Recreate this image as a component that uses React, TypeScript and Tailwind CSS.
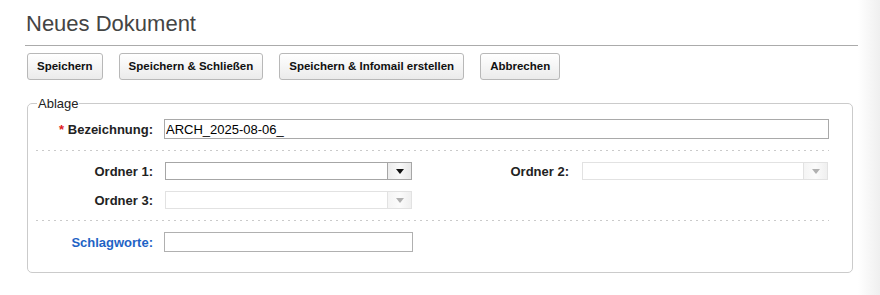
import React from 'react';

const FONT = "font-['Liberation_Sans',Arial,sans-serif]";

function ToolButton({ label }: { label: string }) {
  return (
    <button
      type="button"
      className="h-[27px] px-[9px] rounded-[3px] border border-[#b8b8b8] bg-linear-to-b from-white to-[#ebebeb] text-[11.5px] font-bold text-[#111] leading-none"
    >
      {label}
    </button>
  );
}

function Dropdown({ disabled, width }: { disabled?: boolean; width: string }) {
  return (
    <div
      className={`flex h-[18px] ${width} border bg-white ${
        disabled ? 'border-[#e2e2e2]' : 'border-[#a6a6a6]'
      }`}
    >
      <div className="flex-1" />
      <div
        className={`flex w-[24px] items-center justify-center border-l bg-linear-to-r ${
          disabled
            ? 'border-[#e2e2e2] from-[#f4f4f4] via-[#fbfbfb] to-[#efefef]'
            : 'border-[#a6a6a6] from-[#ececec] via-[#f9f9f9] to-[#e8e8e8]'
        }`}
      >
        <svg width="8" height="5" viewBox="0 0 8 5">
          <path d="M0 0H8L4 5Z" fill={disabled ? '#b0b0b0' : '#111'} />
        </svg>
      </div>
    </div>
  );
}

function Label({ children, className = '' }: { children: React.ReactNode; className?: string }) {
  return (
    <label className={`w-[117px] shrink-0 text-right text-[13px] font-bold leading-[15px] ${className}`}>
      {children}
    </label>
  );
}

function Separator() {
  return (
    <div className="h-px bg-[repeating-linear-gradient(90deg,#cacaca_0_2px,transparent_2px_6px)]" />
  );
}

export default function App() {
  return (
    <div className={`flex min-h-[295px] w-full bg-white ${FONT}`}>
      <div className="w-[858px] shrink-0 pl-[25px]">
        <h1 className="mt-[11px] pl-[1px] text-[22px] leading-[26px] font-normal text-[#444]">
          Neues Dokument
        </h1>
        <div className="mt-[8px] h-px bg-[#ababab]" />

        <div className="mt-[7px] ml-[2px] flex gap-[16px]">
          <ToolButton label="Speichern" />
          <ToolButton label="Speichern & Schließen" />
          <ToolButton label="Speichern & Infomail erstellen" />
          <ToolButton label="Abbrechen" />
        </div>

        <fieldset className="mt-[16px] ml-[2px] mr-[5px] rounded-[5px] border border-[#cbcbcb] pl-[8px] pr-[23px] pt-[8px] pb-[20px]">
          <legend className="ml-[1px] px-[1px] text-[13px] leading-[15px] text-[#222]">Ablage</legend>

          <div className="flex items-center">
            <Label className="text-[#222]">
              <span className="text-[#e02020]">*</span> Bezeichnung:
            </Label>
            <input
              readOnly
              value="ARCH_2025-08-06_"
              className="ml-[11px] h-[20px] flex-1 border border-[#a9a9a9] px-[1px] text-[13px] text-black outline-none"
            />
          </div>

          <div className="mt-[11px]">
            <Separator />
          </div>

          <div className="mt-[11px] flex items-center">
            <Label className="text-[#222]">Ordner 1:</Label>
            <div className="ml-[12px]">
              <Dropdown width="w-[247px]" />
            </div>
            <Label className="ml-[40px] text-[#222]">Ordner 2:</Label>
            <div className="ml-[13px]">
              <Dropdown disabled width="w-[246px]" />
            </div>
          </div>

          <div className="mt-[11px] flex items-center">
            <Label className="text-[#222]">Ordner 3:</Label>
            <div className="ml-[12px]">
              <Dropdown disabled width="w-[247px]" />
            </div>
          </div>

          <div className="mt-[11px]">
            <Separator />
          </div>

          <div className="mt-[11px] flex items-center">
            <Label className="text-[#1e63c5]">Schlagworte:</Label>
            <input
              readOnly
              value=""
              className="ml-[11px] h-[20px] w-[249px] border border-[#b0b0b0] px-[1px] text-[13px] outline-none"
            />
          </div>
        </fieldset>
      </div>
      <div className="flex-1 bg-linear-to-r from-white to-[#efefef]" />
    </div>
  );
}
